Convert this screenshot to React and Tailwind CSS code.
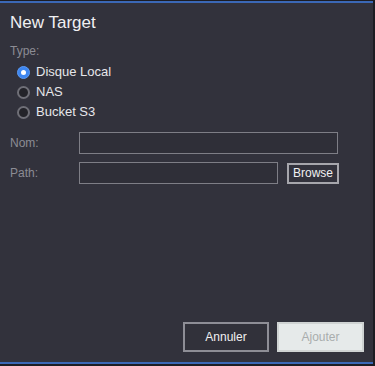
import React from 'react'

function Radio({ checked, label }) {
  return (
    <label className="flex items-center gap-[6px] h-[20px]">
      {checked ? (
        <span className="w-[13px] h-[13px] rounded-full bg-[#3d86f0] border border-[#5b9af5] flex items-center justify-center">
          <span className="w-[5px] h-[5px] rounded-full bg-white" />
        </span>
      ) : (
        <span className="w-[13px] h-[13px] rounded-full bg-[#232329] border-2 border-[#6f6f77]" />
      )}
      <span className="text-[13px] text-[#e6e6ea]">{label}</span>
    </label>
  )
}

export default function App() {
  return (
    <div className="w-[375px] h-[366px] bg-[#1d1d23] pt-[1px] pb-[2px] pr-[2px] flex flex-col" style={{ fontFamily: '"Liberation Sans", Arial, sans-serif' }}>
      <div className="flex-1 bg-[#32323c] border-t-2 border-b-2 border-[#3b68b6] flex flex-col px-[10px]">
        <div className="mt-[10px] text-[17px] leading-[20px] text-[#f0f0f2]">New Target</div>

        <div className="mt-[11px] text-[12px] leading-[14px] text-[#8c8c94]">Type:</div>
        <div className="mt-[4px] pl-[7px] flex flex-col">
          <Radio checked label="Disque Local" />
          <Radio label="NAS" />
          <Radio label="Bucket S3" />
        </div>

        <div className="mt-[10px] flex items-center h-[22px]">
          <span className="w-[69px] text-[12px] text-[#8c8c94]">Nom:</span>
          <div className="w-[259px] h-[22px] border border-[#7e7e86] bg-[#2f2f38]" />
        </div>
        <div className="mt-[8px] flex items-center h-[22px]">
          <span className="w-[69px] text-[12px] text-[#8c8c94]">Path:</span>
          <div className="w-[199px] h-[22px] border border-[#7e7e86] bg-[#2f2f38]" />
          <button className="ml-[9px] w-[52px] h-[21px] border-2 border-[#a6a6ac] text-[12px] text-[#f0f0f2] flex items-center justify-center">Browse</button>
        </div>

        <div className="mt-auto mb-[10px] -mr-[1px] flex justify-end gap-[8px]">
          <button className="w-[86px] h-[30px] border-2 border-[#8e8e96] bg-[#31313a] text-[12px] text-[#f0f0f2]">Annuler</button>
          <button className="w-[87px] h-[30px] border-2 border-[#cfd3d3] bg-[#e6eaea] text-[12px] text-[#a9adad]">Ajouter</button>
        </div>
      </div>
    </div>
  )
}
